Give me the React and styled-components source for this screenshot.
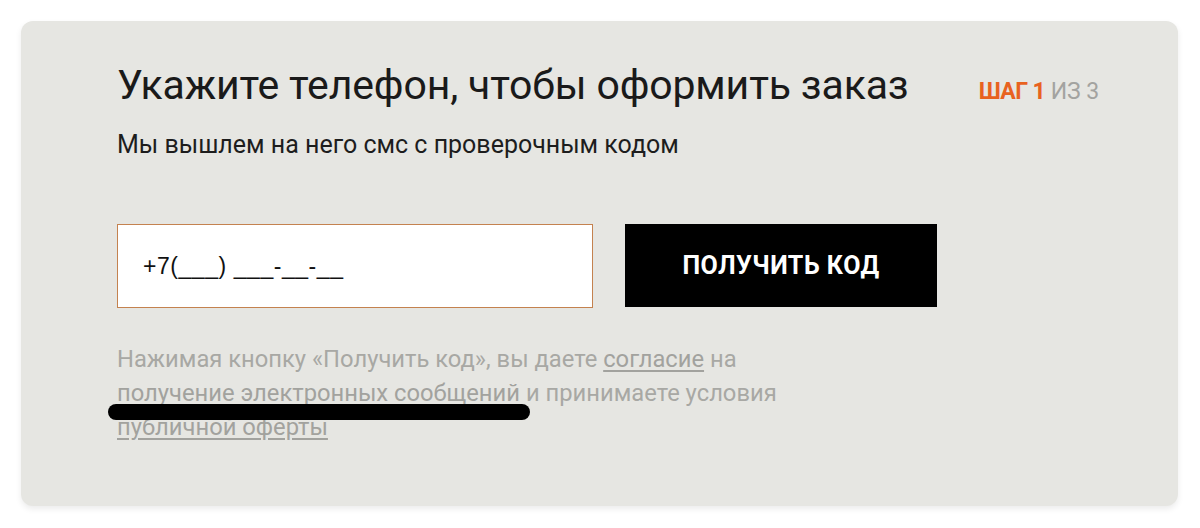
import React from "react";
import styled, { createGlobalStyle } from "styled-components";

const GlobalStyle = createGlobalStyle`
  body {
    margin: 0;
    background: #ffffff;
    font-family: Roboto, "Noto Sans", sans-serif;
  }
`;

const Page = styled.div`
  padding: 21px 22px 22px 21px;
`;

const Card = styled.div`
  height: 485px;
  box-sizing: border-box;
  background: #e6e6e2;
  border-radius: 12px;
  box-shadow: 0 3px 6px rgba(0, 0, 0, 0.08);
  padding: 36px 79px 0 96px;
`;

const Header = styled.div`
  display: flex;
  justify-content: space-between;
  align-items: baseline;
`;

const Title = styled.h1`
  margin: 0;
  font-size: 41px;
  font-weight: 400;
  line-height: 56px;
  color: #1a1a1a;
  letter-spacing: -0.15px;
`;

const Step = styled.div`
  font-size: 23px;
  color: #a3a3a0;
  letter-spacing: -0.1px;
`;

const Current = styled.span`
  color: #e8621f;
  font-weight: 700;
  letter-spacing: -0.6px;
`;

const Subtitle = styled.p`
  margin: 17px 0 0;
  font-size: 25px;
  line-height: 30px;
  color: #1d1d1d;
`;

const Form = styled.div`
  display: flex;
  gap: 32px;
  margin-top: 64px;
`;

const Phone = styled.input`
  width: 476px;
  height: 84px;
  box-sizing: border-box;
  border: 1px solid #c4824f;
  background: #ffffff;
  padding: 0 25px;
  font-family: "Liberation Sans", Roboto, sans-serif;
  font-size: 23px;
  letter-spacing: 0.55px;
  color: #111111;
  outline: none;
  &::placeholder {
    color: #111111;
  }
`;

const Submit = styled.button`
  width: 312px;
  height: 83px;
  border: none;
  background: #000000;
  color: #ffffff;
  font-family: Roboto, sans-serif;
  font-size: 25px;
  font-weight: 700;
  letter-spacing: 0.5px;
  cursor: pointer;
`;

const Note = styled.p`
  position: relative;
  margin: 34px 0 0;
  width: 670px;
  font-size: 23.75px;
  line-height: 34px;
  color: #a8a8a4;
`;

const Link = styled.a`
  color: #a2a29e;
  text-decoration: underline;
  text-underline-offset: 3px;
`;

const Redaction = styled.span`
  position: absolute;
  left: -9px;
  top: 62px;
  width: 422px;
  height: 16px;
  border-radius: 8px;
  background: #000000;
`;

export default function App() {
  return (
    <Page>
      <GlobalStyle />
      <Card>
        <Header>
          <Title>Укажите телефон, чтобы оформить заказ</Title>
          <Step>
            <Current>ШАГ 1</Current> ИЗ 3
          </Step>
        </Header>
        <Subtitle>Мы вышлем на него смс с проверочным кодом</Subtitle>
        <Form>
          <Phone placeholder="+7(___) ___-__-__" />
          <Submit>ПОЛУЧИТЬ КОД</Submit>
        </Form>
        <Note>
          Нажимая кнопку «Получить код», вы даете <Link>согласие</Link> на{" "}
          <Link>получение электронных сообщений</Link> и принимаете условия{" "}
          <Link>публичной оферты</Link>
          <Redaction />
        </Note>
      </Card>
    </Page>
  );
}
